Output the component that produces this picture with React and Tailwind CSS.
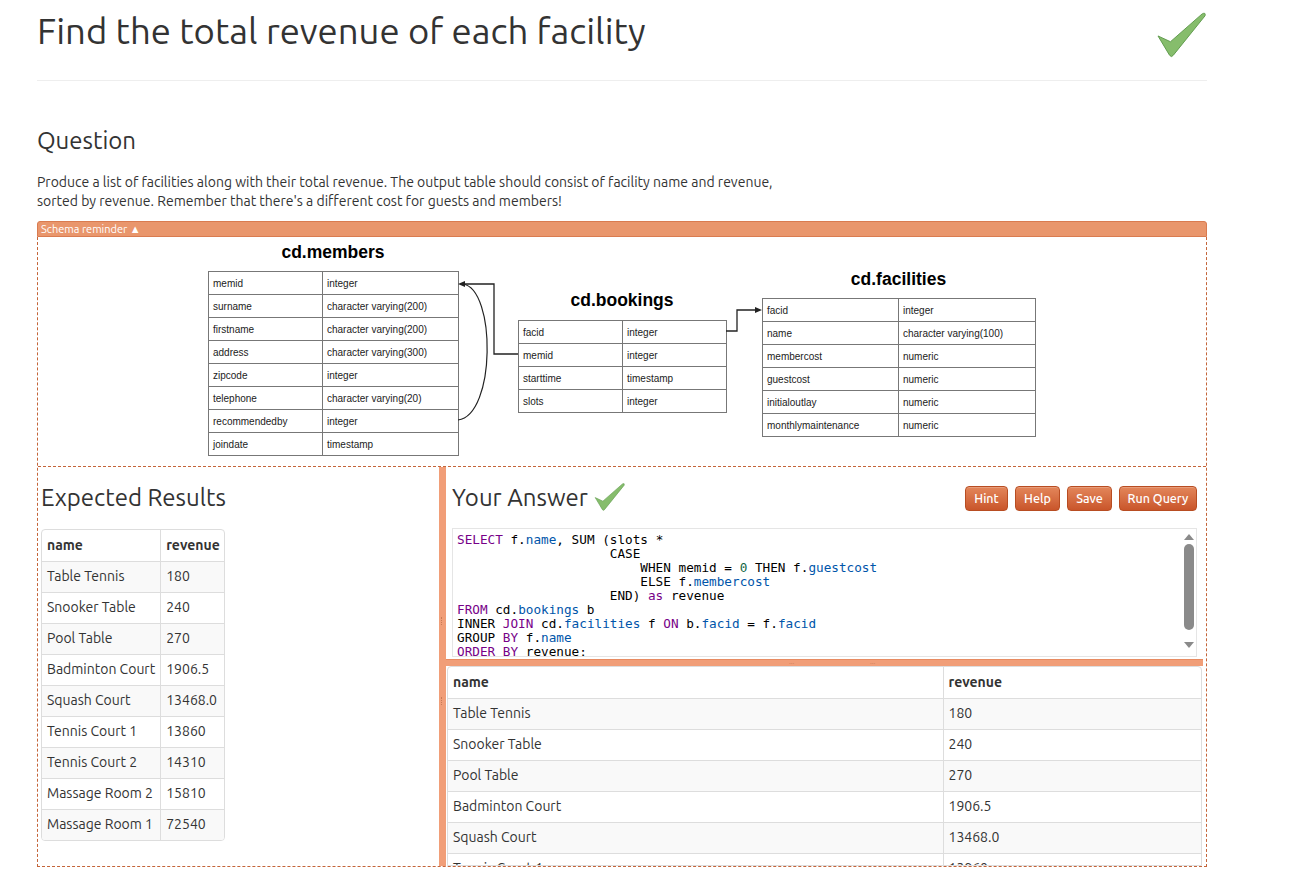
import React from "react";

const K = ({ children }) => <span className="text-[#770088]">{children}</span>;
const V = ({ children }) => <span className="text-[#0055aa]">{children}</span>;
const N = ({ children }) => <span className="text-[#116644]">{children}</span>;

function Check({ className }) {
  return (
    <svg viewBox="0 0 54 50" className={className}>
      <path
        d="M2 26 L15 32 L48 3 Q52 1 51 5 L18 46 Q16 49 14 46 Z"
        fill="#86bd6c"
        stroke="#5f9a4c"
        strokeWidth="1"
        strokeLinejoin="round"
      />
    </svg>
  );
}

function SchemaTable({ title, rows, left, top, titleTop, w1, w2 }) {
  return (
    <>
      <div
        className="absolute text-center font-bold text-[17.5px] leading-[20px] text-black"
        style={{ left, top: titleTop, width: w1 + w2, fontFamily: '"Liberation Sans", Arial, sans-serif' }}
      >
        {title}
      </div>
      <table
        className="absolute border-collapse text-[10px] text-[#222]"
        style={{ left, top, fontFamily: '"Liberation Sans", Arial, sans-serif' }}
      >
        <tbody>
          {rows.map(([a, b]) => (
            <tr key={a}>
              <td className="border border-[#777] h-[23px] px-[4px] p-0 align-middle" style={{ width: w1 }}>
                {a}
              </td>
              <td className="border border-[#777] h-[23px] px-[4px] p-0 align-middle" style={{ width: w2 }}>
                {b}
              </td>
            </tr>
          ))}
        </tbody>
      </table>
    </>
  );
}

const results = [
  ["Table Tennis", "180"],
  ["Snooker Table", "240"],
  ["Pool Table", "270"],
  ["Badminton Court", "1906.5"],
  ["Squash Court", "13468.0"],
  ["Tennis Court 1", "13860"],
  ["Tennis Court 2", "14310"],
  ["Massage Room 2", "15810"],
  ["Massage Room 1", "72540"],
];

function Btn({ children, w }) {
  return (
    <button
      className="h-[25px] rounded-[4px] border border-[#b84d22] bg-gradient-to-b from-[#e3865a] to-[#c9552a] text-white text-[12.5px] font-medium leading-[23px] text-center shadow-[inset_0_1px_0_rgba(255,255,255,0.2)]"
      style={{ width: w }}
    >
      {children}
    </button>
  );
}

export default function App() {
  return (
    <div
      className="w-[1295px] h-[872px] overflow-hidden bg-white text-[#333]"
      style={{ fontFamily: 'Ubuntu, Lato, "Open Sans", sans-serif' }}
    >
      <div className="ml-[37px] w-[1170px]">
        {/* header */}
        <div className="flex justify-between items-start h-[81px] border-b border-[#eee]">
          <h1 className="text-[36.5px] leading-[40px] mt-[11px] font-normal">
            Find the total revenue of each facility
          </h1>
          <Check className="w-[52px] h-[48px] mt-[11px] mr-[-1px]" />
        </div>

        <h2 className="text-[24px] leading-[28px] mt-[46px] font-normal">Question</h2>
        <p className="text-[14px] leading-[19px] mt-[18px] w-[760px]">
          Produce a list of facilities along with their total revenue. The output table should consist of facility name
          and revenue, sorted by revenue. Remember that there's a different cost for guests and members!
        </p>

        {/* schema box */}
        <div className="mt-[10px]">
          <div className="h-[16px] bg-[#e9966c] border border-[#d97b50] rounded-t-[3px] text-white text-[11px] leading-[14px] px-[3px]">
            Schema reminder ▲
          </div>
          <div className="border border-t-0 border-dashed border-[#c4653a]">
            <div className="relative h-[229px]">
              <SchemaTable
                title="cd.members"
                left={170}
                top={34}
                titleTop={5}
                w1={114}
                w2={136}
                rows={[
                  ["memid", "integer"],
                  ["surname", "character varying(200)"],
                  ["firstname", "character varying(200)"],
                  ["address", "character varying(300)"],
                  ["zipcode", "integer"],
                  ["telephone", "character varying(20)"],
                  ["recommendedby", "integer"],
                  ["joindate", "timestamp"],
                ]}
              />
              <SchemaTable
                title="cd.bookings"
                left={480}
                top={83}
                titleTop={53}
                w1={104}
                w2={104}
                rows={[
                  ["facid", "integer"],
                  ["memid", "integer"],
                  ["starttime", "timestamp"],
                  ["slots", "integer"],
                ]}
              />
              <SchemaTable
                title="cd.facilities"
                left={724}
                top={61}
                titleTop={32}
                w1={136}
                w2={137}
                rows={[
                  ["facid", "integer"],
                  ["name", "character varying(100)"],
                  ["membercost", "numeric"],
                  ["guestcost", "numeric"],
                  ["initialoutlay", "numeric"],
                  ["monthlymaintenance", "numeric"],
                ]}
              />
              <svg className="absolute left-0 top-0" width="1168" height="229">
                <path d="M480 117 H456 V47 H426" fill="none" stroke="#222" strokeWidth="1.3" />
                <path d="M420 47 L427 44 L427 50 Z" fill="#222" />
                <path d="M420 183 C458 178 458 52 425 47" fill="none" stroke="#222" strokeWidth="1.2" />
                <path d="M688 94 H699 V73 H718" fill="none" stroke="#222" strokeWidth="1.3" />
                <path d="M724 73 L717 70 L717 76 Z" fill="#222" />
              </svg>
            </div>

            {/* bottom panes */}
            <div className="flex h-[400px] border-t border-dashed border-[#c4653a] overflow-hidden">
              {/* left pane */}
              <div className="w-[401px] shrink-0 pl-[3px] pt-[17px]">
                <h3 className="text-[24px] leading-[28px] font-normal">Expected Results</h3>
                <div className="mt-[17px] w-[184px] border border-[#ddd] rounded-[4px] overflow-hidden">
                  <table className="w-full border-collapse text-[14px]">
                    <thead>
                      <tr className="h-[31px]">
                        <th className="text-left font-bold px-[5px] w-[120px] border-r border-[#ddd]">name</th>
                        <th className="text-left font-bold px-[5px]">revenue</th>
                      </tr>
                    </thead>
                    <tbody>
                      {results.map(([n, r], i) => (
                        <tr key={n} className={`h-[31px] border-t border-[#ddd] ${i % 2 === 0 ? "bg-[#f9f9f9]" : "bg-white"}`}>
                          <td className="px-[5px] border-r border-[#ddd] whitespace-nowrap">{n}</td>
                          <td className="px-[5px]">{r}</td>
                        </tr>
                      ))}
                    </tbody>
                  </table>
                </div>
              </div>

              {/* vertical splitter */}
              <div className="w-[7px] shrink-0 bg-[#f19e78] relative">
                <div className="absolute left-[2px] top-[150px] w-[1px] h-[8px] border-l border-dotted border-[#c77a55]" />
                <div className="absolute left-[2px] top-[230px] w-[1px] h-[8px] border-l border-dotted border-[#c77a55]" />
              </div>

              {/* right pane */}
              <div className="flex-1 flex flex-col min-w-0">
                <div className="h-[192px] shrink-0 pl-[6px] pr-[9px]">
                  <div className="flex justify-between items-center mt-[16px] h-[30px]">
                    <div className="flex items-center">
                      <h3 className="text-[24px] leading-[28px] font-normal">Your Answer</h3>
                      <Check className="w-[32px] h-[30px] ml-[6px] mt-[-2px]" />
                    </div>
                    <div className="flex gap-[7px] items-center">
                      <Btn w={43}>Hint</Btn>
                      <Btn w={45}>Help</Btn>
                      <Btn w={45}>Save</Btn>
                      <Btn w={78}>Run Query</Btn>
                    </div>
                  </div>
                  <div className="relative mt-[15px] h-[129px] border border-[#e5e5e5] bg-white overflow-hidden">
                    <pre
                      className="pl-[4px] pt-[4px] text-[12.7px] leading-[14px] text-black m-0"
                      style={{ fontFamily: '"DejaVu Sans Mono", monospace' }}
                    >
                      <K>SELECT</K> f.<V>name</V>, SUM (slots *{"\n"}
                      {"                    "}CASE{"\n"}
                      {"                        "}WHEN memid = <N>0</N> THEN f.<V>guestcost</V>{"\n"}
                      {"                        "}ELSE f.<V>membercost</V>{"\n"}
                      {"                    "}END) <K>as</K> revenue{"\n"}
                      <K>FROM</K> cd.<V>bookings</V> b{"\n"}
                      INNER <K>JOIN</K> cd.<V>facilities</V> f <K>ON</K> b.<V>facid</V> = f.<V>facid</V>{"\n"}
                      GROUP <K>BY</K> f.<V>name</V>{"\n"}
                      <K>ORDER</K> <K>BY</K> revenue;
                    </pre>
                    {/* scrollbar */}
                    <div className="absolute right-[2px] top-0 w-[11px] h-full flex flex-col items-center">
                      <div className="mt-[5px] w-0 h-0 border-l-[5px] border-r-[5px] border-b-[6px] border-l-transparent border-r-transparent border-b-[#8a8a8a]" />
                      <div className="mt-[4px] w-[10px] h-[86px] rounded-[5px] bg-[#8a8a8a]" />
                      <div className="mt-[12px] w-0 h-0 border-l-[5px] border-r-[5px] border-t-[6px] border-l-transparent border-r-transparent border-t-[#8a8a8a]" />
                    </div>
                  </div>
                </div>

                {/* horizontal splitter */}
                <div className="h-[7px] shrink-0 mr-[3px] bg-[#f19e78] border-t border-[#e88b61] relative">
                  <div className="absolute left-[343px] top-[1px] text-[7px] leading-[4px] text-[#c77a55]">···</div>
                  <div className="absolute left-[424px] top-[1px] text-[7px] leading-[4px] text-[#c77a55]">···</div>
                </div>

                {/* result table */}
                <div className="ml-[1px] mr-[4px] border border-[#ddd] rounded-t-[4px] overflow-hidden">
                  <table className="w-full border-collapse text-[14px]">
                    <thead>
                      <tr className="h-[31px]">
                        <th className="text-left font-bold px-[5px] w-[495px] border-r border-[#ddd]">name</th>
                        <th className="text-left font-bold px-[5px]">revenue</th>
                      </tr>
                    </thead>
                    <tbody>
                      {results.map(([n, r], i) => (
                        <tr key={n} className={`h-[31px] border-t border-[#ddd] ${i % 2 === 0 ? "bg-[#f9f9f9]" : "bg-white"}`}>
                          <td className="px-[5px] border-r border-[#ddd]">{n}</td>
                          <td className="px-[5px]">{r}</td>
                        </tr>
                      ))}
                    </tbody>
                  </table>
                </div>
              </div>
            </div>
          </div>
        </div>
      </div>
    </div>
  );
}
